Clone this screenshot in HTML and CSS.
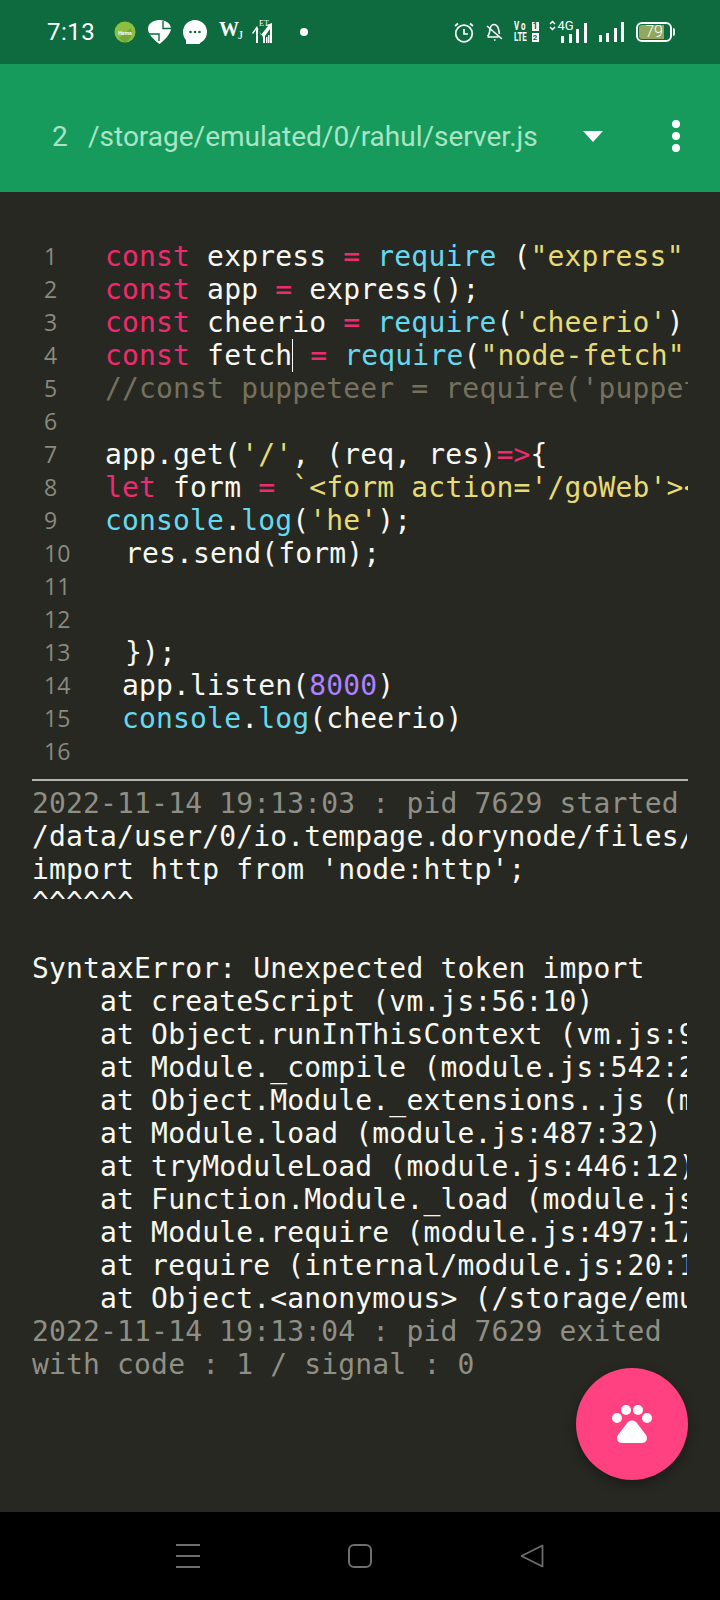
FILE: index.html
```html
<!DOCTYPE html>
<html lang="en">
<head>
<meta charset="utf-8">
<title>server.js</title>
<link rel="stylesheet" href="styles.css">
</head>
<body>
<div class="phone">
  <header class="status">
    <span class="clock">7:13</span>
    <div class="notif">
      <svg class="ic" width="22" height="22" viewBox="0 0 22 22"><circle cx="11" cy="11" r="10.500" fill="#8fbf3f"/><path d="M5 17 L17 7 A10.500 10.500 0 0 1 10 21.500 Z" fill="#76a838"/><text x="11" y="13.500" class="tiny" text-anchor="middle">Home</text></svg>
      <svg class="ic" width="23" height="24" viewBox="0 0 23 24"><path d="M11.500 0C5 0 0 3.500 0 9c0 5 6 11 11.500 15C16 20.500 20.500 16 22 12c.7-1 1-2 1-3 0-5.500-5-9-11.500-9z" fill="#fff"/><path d="M15 1v7.500h8M0 14h11v7" fill="none" stroke="#0d6b3f" stroke-width="1.400"/></svg>
      <svg class="ic" width="24" height="24" viewBox="0 0 24 24"><circle cx="12" cy="12" r="12" fill="#fff"/><path d="M3 17v7h14l-3-6z" fill="#fff"/><circle cx="7.500" cy="12" r="1.300" fill="#0d6b3f"/><circle cx="12" cy="12" r="1.300" fill="#0d6b3f"/><circle cx="16.500" cy="12" r="1.300" fill="#0d6b3f"/></svg>
      <span class="wj"><b>W</b><i>J</i></span>
      <svg class="ic" width="21" height="24" viewBox="0 0 21 24"><text x="12" y="6" class="et" text-anchor="middle">ET</text><path d="M0 13 5 6l4 9 7-9-1.500-1L20 3v20h-2V9l-5 7v7h-2v-6L6 9v14H4V10l-3 4z" fill="#fff"/><path d="M14 23v-6h1.500v6zM16 23v-8h1.500v8z" fill="#fff"/></svg>
      <span class="dot"></span>
    </div>
    <div class="sys">
      <svg class="alarm" width="20" height="21" viewBox="0 0 20 21" fill="none" stroke="#fff" stroke-width="1.700"><circle cx="10" cy="11.500" r="8.300"/><path d="M10 7v5h4M1 4l3-2.500M19 4l-3-2.500"/></svg>
      <svg class="bell" width="17" height="20" viewBox="0 0 17 20" fill="none" stroke="#fff" stroke-width="1.600"><path d="M1.500 14.500c2-2 2-4 2.500-7C4.500 4 6.500 2.500 8 2.500S12 4 12.500 7l1 5M1.500 15h11M8 18h1.500M1 4l15 13"/></svg>
      <div class="volte"><span class="vt vo">Vo</span><em>1</em><span class="vt">LTE</span><em class="sm">2</em></div>
      <div class="net">
        <div class="lbl"><svg width="7" height="11" viewBox="0 0 7 11" fill="none" stroke="#fff" stroke-width="1.500"><path d="M1 4l2.500-2.500L6 4M1 7l2.500 2.500L6 7"/></svg><span>4G</span></div>
        <div class="bars"><i class="b1"></i><i class="b2"></i><i class="b3"></i><i class="b4"></i></div>
      </div>
      <div class="bars solo"><i class="b1"></i><i class="b2"></i><i class="b3"></i><i class="b4"></i></div>
      <div class="battery"><div class="cell"><div class="fill"></div><span>79</span></div><i></i></div>
    </div>
  </header>
  <div class="toolbar">
    <span class="num">2</span>
    <span class="path">/storage/emulated/0/rahul/server.js</span>
    <span class="caret"></span>
    <div class="more"><i></i><i></i><i></i></div>
  </div>
  <main class="editor">
    <section class="code">
      <div class="gutter">
        <span>1</span><span>2</span><span>3</span><span>4</span><span>5</span><span>6</span><span>7</span><span>8</span><span>9</span><span>10</span><span>11</span><span>12</span><span>13</span><span>14</span><span>15</span><span>16</span>
      </div>
      <pre class="src"><span class="k">const</span> express <span class="k">=</span> <span class="f">require</span> (<span class="s">"express"</span>);
<span class="k">const</span> app <span class="k">=</span> express();
<span class="k">const</span> cheerio <span class="k">=</span> <span class="f">require</span>(<span class="s">'cheerio'</span>);
<span class="k">const</span> fetch<span class="cursor"></span> <span class="k">=</span> <span class="f">require</span>(<span class="s">"node-fetch"</span>);
<span class="c">//const puppeteer = require('puppeteer');</span>

app.get(<span class="s">'/'</span>, (req, res)<span class="k">=&gt;</span>{
<span class="k">let</span> form <span class="k">=</span> <span class="s">`&lt;form action='/goWeb'&gt;&lt;input&gt;`</span>;
<span class="f">console</span>.<span class="f">log</span>(<span class="s">'he'</span>);
<span class="nudge"> res.send(form);</span>


<span class="nudge"> });</span>
 app.listen(<span class="n">8000</span>)
 <span class="f">console</span>.<span class="f">log</span>(cheerio)
</pre>
    </section>
    <pre class="log"><span class="m">2022-11-14 19:13:03 : pid 7629 started</span>
/data/user/0/io.tempage.dorynode/files/node
import http from 'node:http';
^^^^^^

SyntaxError: Unexpected token import
    at createScript (vm.js:56:10)
    at Object.runInThisContext (vm.js:97:10)
    at Module._compile (module.js:542:28)
    at Object.Module._extensions..js (module.js:579:10)
    at Module.load (module.js:487:32)
    at tryModuleLoad (module.js:446:12)
    at Function.Module._load (module.js:438:3)
    at Module.require (module.js:497:17)
    at require (internal/module.js:20:19)
    at Object.&lt;anonymous&gt; (/storage/emulated/0/rahul
<span class="m">2022-11-14 19:13:04 : pid 7629 exited</span>
<span class="m">with code : 1 / signal : 0</span></pre>
    <button class="fab" aria-label="Run">
      <svg width="40" height="38" viewBox="0 0 40 38" fill="#fff"><circle cx="5" cy="13" r="5"/><circle cx="14" cy="5" r="5"/><circle cx="26" cy="5" r="5"/><circle cx="35" cy="13" r="5"/><path d="M20 15.500c-2.500 0-4.500 1.500-6 4L6 30c-2.200 3.500-.5 8 4 8h20c4.500 0 6.200-4.500 4-8L26 19.500c-1.500-2.500-3.500-4-6-4z"/></svg>
    </button>
  </main>
  <nav class="navbar">
    <div class="menu"><i></i><i></i><i></i></div>
    <div class="home"></div>
    <svg class="back" width="24" height="24" viewBox="0 0 24 24" fill="none" stroke="#6f6f6f" stroke-width="1.700" stroke-linejoin="round"><path d="M22.500 1.500v21L1.500 12z"/></svg>
  </nav>
</div>
</body>
</html>
```
FILE: styles.css
```css
* { box-sizing: border-box; }
html, body { margin: 0; padding: 0; background: #000; }
.phone { width: 720px; height: 1600px; display: flex; flex-direction: column; overflow: hidden; font-family: Roboto, "Liberation Sans", sans-serif; }
.status { height: 64px; flex: none; background: #0d6b3f; color: #fff; display: flex; align-items: center; padding: 0 45px 0 47px; }
.clock { font-size: 24px; letter-spacing: .5px; width: 67px; }
.notif { display: flex; align-items: center; gap: 12px; }
.ic { display: block; }
.tiny { font: 700 5px Roboto, sans-serif; fill: #fff; }
.et { font: 8px "Liberation Serif", serif; fill: #fff; }
.wj { display: flex; align-items: flex-start; font-family: "Liberation Serif", serif; font-size: 20px; line-height: 20px; width: 21px; }
.wj b { font-weight: 700; letter-spacing: -1px; }
.wj i { font-size: 13px; font-style: normal; margin-top: 6px; }
.dot { width: 8px; height: 8px; border-radius: 50%; background: #fff; margin-left: 15px; }
.sys { margin-left: auto; display: flex; align-items: center; }
.sys > svg { display: block; }
.alarm { margin-right: 12px; }
.bell { margin-right: 11px; }
.volte { display: grid; grid-template-columns: 15px 7px; column-gap: 3px; row-gap: 2px; width: 25px; margin-right: 10px; font: 700 12px/9px Roboto, sans-serif; }
.vt { display: block; white-space: nowrap; transform: scaleX(.66); transform-origin: left center; }
.vo { letter-spacing: 3px; }
.volte em { font-style: normal; font-size: 9px; background: #fff; color: #0d6b3f; text-align: center; display: block; height: 9px; }
.volte em.sm { font-size: 8px; }
.net { position: relative; width: 38px; height: 22px; margin-right: 12px; }
.net .lbl { display: flex; align-items: flex-start; font-size: 13px; line-height: 12px; gap: 2px; position: absolute; left: 0; top: -1px; }
.net .bars { position: absolute; right: 0; bottom: 0; }
.bars { display: flex; align-items: flex-end; gap: 4.500px; height: 20px; }
.bars i { width: 3px; background: #fff; display: block; }
.bars .b1 { height: 7px; } .bars .b2 { height: 9px; } .bars .b3 { height: 14px; } .bars .b4 { height: 20px; }
.bars.solo { margin-right: 12px; }
.battery { display: flex; align-items: center; }
.cell { position: relative; width: 36px; height: 20px; border: 2px solid #fff; border-radius: 6px; padding: 1px; display: block; }
.fill { width: 25px; height: 14px; background: #93a75e; border-radius: 3px 0 0 3px; }
.cell span { position: absolute; left: 0; right: 0; top: -2px; text-align: center; font-size: 16px; font-weight: 300; line-height: 20px; color: #fff; }
.battery > i { width: 2px; height: 8px; background: #fff; margin-left: 1px; border-radius: 0 2px 2px 0; }
.toolbar { height: 128px; flex: none; background: #169b5d; display: flex; align-items: center; color: #a9e4c6; padding: 16px 0 0 52px; font-size: 28px; }
.num { width: 36px; }
.path { width: 495px; white-space: nowrap; }
.caret { width: 0; height: 0; border-left: 10px solid transparent; border-right: 10px solid transparent; border-top: 11px solid #fff; }
.more { display: flex; flex-direction: column; gap: 4px; margin-left: 69px; }
.more i { width: 8px; height: 8px; background: #fff; border-radius: 50%; display: block; }
.editor { position: relative; flex: 1; background: #272822; color: #f8f8f2; font-family: "DejaVu Sans Mono", monospace; font-size: 28px; line-height: 33px; overflow: hidden; padding: 48px 32px 0; }
.code { display: flex; border-bottom: 2px solid #b5b5ae; height: 541px; width: 656px; }
.gutter { width: 73px; flex: none; display: flex; flex-direction: column; padding-left: 12px; font-family: "Open Sans", sans-serif; font-size: 23px; color: #8a8a7e; }
.gutter span { height: 33px; line-height: 33px; display: block; }
.src, .log { margin: 0; font: inherit; letter-spacing: .16px; white-space: pre; overflow: hidden; }
.src { flex: 1; width: 0; }
.log { width: 655px; padding-top: 6px; }
.k { color: #ee2a70; }
.f { color: #66d9ef; }
.s { color: #e6db74; }
.c { color: #75715e; }
.n { color: #ae81ff; }
.m { color: #8f8f85; }
.nudge { padding-left: 3px; }
.cursor { display: inline-block; width: 0; height: 33px; border-left: 1px solid #fff; vertical-align: top; }
.fab { position: absolute; right: 32px; bottom: 32px; width: 112px; height: 112px; border-radius: 50%; background: #ff4081; border: 0; padding: 0; display: flex; align-items: center; justify-content: center; box-shadow: 0 4px 12px rgba(0,0,0,.35); }
.navbar { height: 88px; flex: none; background: #000; display: flex; align-items: center; padding: 0 0 0 176px; }
.menu { display: flex; flex-direction: column; gap: 9px; width: 24px; margin-right: 148px; }
.menu i { height: 2px; background: #6f6f6f; display: block; }
.home { width: 24px; height: 24px; border: 2px solid #6f6f6f; border-radius: 6px; margin-right: 148px; }
```
